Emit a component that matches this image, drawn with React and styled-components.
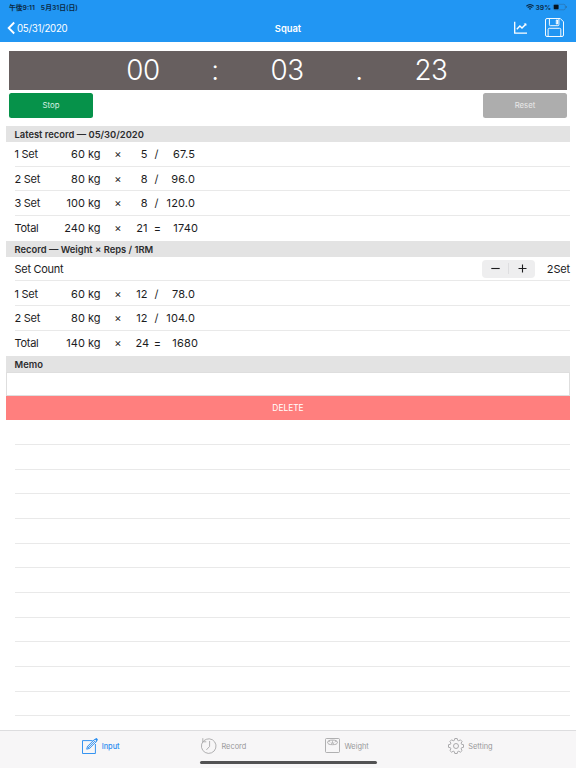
import { useState } from 'react';
import styled, { createGlobalStyle } from 'styled-components';

const GlobalStyle = createGlobalStyle`
  * {
    box-sizing: border-box;
  }

  body {
    margin: 0;
    background: #fff;
    font-family: Inter, 'Noto Sans CJK JP', sans-serif;
    color: #1c1c1e;
  }

  button {
    font-family: inherit;
    border: 0;
    padding: 0;
  }
`;

const StApp = styled.div`
  display: flex;
  flex-direction: column;
  width: 576px;
  height: 768px;
  overflow: hidden;
`;

const StHeader = styled.header`
  flex: none;
  height: 42px;
  background: #2196f3;
`;

const StStatusBar = styled.div`
  display: flex;
  align-items: center;
  justify-content: space-between;
  height: 14px;
  padding: 0 9px;
  font-size: 6.8px;
  font-weight: 600;
  color: #0b2a45;
`;

const StStatusGroup = styled.div`
  display: flex;
  align-items: center;
  gap: ${({ $gap }) => $gap}px;
`;

const StNavBar = styled.div`
  display: grid;
  grid-template-columns: 1fr auto 1fr;
  align-items: center;
  height: 28px;
  padding: 0 12px;
  color: #fff;
`;

const StBack = styled.div`
  display: flex;
  align-items: center;
  gap: 2px;
  margin-left: -5px;
  font-size: 9.7px;
  letter-spacing: -0.25px;
`;

const StTitle = styled.div`
  font-size: 9.4px;
  font-weight: 600;
`;

const StActions = styled.div`
  display: flex;
  align-items: center;
  justify-content: flex-end;
  gap: 18px;
  padding-bottom: 2px;
`;

const StTimer = styled.div`
  display: flex;
  flex: none;
  align-items: center;
  height: 39px;
  margin: 8.5px 9px 0;
  padding: 0 100px 0 98px;
  background: #675f5f;
`;

const StTimerText = styled.div`
  flex: 1;
  text-align: center;
  color: #fff;
  font-size: 27.8px;
  font-weight: 350;
  letter-spacing: -0.4px;
  line-height: 39px;
`;

const StTimerButtons = styled.div`
  display: flex;
  flex: none;
  justify-content: space-between;
  height: 36.5px;
  padding: 3.5px 9px 8.5px;
`;

const StTimerButton = styled.button`
  width: 84px;
  border-radius: 2.5px;
  font-size: 7.8px;
  color: ${({ $color }) => $color};
  background: ${({ $background }) => $background};
`;

const StContent = styled.main`
  display: flex;
  flex: 1;
  flex-direction: column;
  min-height: 0;
  overflow: hidden;
  padding: 0 6px;
`;

const StSectionTitle = styled.div`
  flex: none;
  height: 16px;
  padding-left: 8.5px;
  font-size: 9.4px;
  font-weight: 600;
  line-height: 17px;
  color: #2c2c2e;
  background: #e3e3e3;
`;

const StRow = styled.div`
  display: flex;
  flex: none;
  align-items: center;
  height: 24.7px;
  margin-left: 8.5px;
  padding-top: 0.5px;
  font-size: 11px;
  border-bottom: 1px solid ${({ $last }) => ($last ? 'transparent' : '#e9e9e9')};
`;

const StCell = styled.div`
  flex: none;
  width: ${({ $width }) => $width}px;
  text-align: right;
  white-space: nowrap;
`;

const StLabel = styled(StCell)`
  text-align: left;
  letter-spacing: -0.28px;
`;

const StSign = styled(StCell)`
  text-align: center;
`;

const StResult = styled(StCell)`
  letter-spacing: 0.15px;
`;

const StStepper = styled.div`
  display: flex;
  align-items: center;
  width: 53px;
  height: 18px;
  margin-left: auto;
  border-radius: 4px;
  background: #eeeeef;
`;

const StStepButton = styled.button`
  display: flex;
  flex: 1;
  align-items: center;
  justify-content: center;
  height: 11px;
  color: #1c1c1e;
  background: none;

  & + & {
    border-left: 1px solid #dedee0;
  }
`;

const StSetCount = styled.div`
  width: 35px;
  text-align: right;
  letter-spacing: -0.15px;
`;

const StMemo = styled.input`
  flex: none;
  height: 24px;
  padding: 0 8px;
  border: 1px solid #dedede;
  border-radius: 0;
  outline: 0;
`;

const StDelete = styled.button`
  flex: none;
  height: 24.7px;
  padding-top: 1px;
  font-size: 8.4px;
  color: #fff;
  background: #ff7f7e;
`;

const StTabBar = styled.nav`
  display: flex;
  flex: none;
  flex-direction: column;
  align-items: center;
  height: 38px;
  background: #f7f6f7;
  border-top: 1px solid #dddddf;
`;

const StTabs = styled.div`
  display: flex;
  align-items: center;
  width: 498px;
  height: 29px;
  padding-right: 5px;
`;

const StTab = styled.div`
  display: flex;
  flex: 1;
  align-items: center;
  justify-content: center;
  gap: 4px;
  font-size: 7.4px;
  font-weight: ${({ $active }) => ($active ? 500 : 400)};
  color: ${({ $active }) => ($active ? '#2b8ef0' : '#98989a')};
`;

const StTabName = styled.span`
  padding-top: 2px;
`;

const StHomeIndicator = styled.div`
  width: 177px;
  height: 3px;
  margin-top: 0.5px;
  border-radius: 2px;
  background: #525253;
`;

const StIcon = styled.svg`
  display: block;
  flex: none;
  fill: none;
  stroke: currentColor;
  overflow: visible;
`;

const WifiIcon = () => (
  <StIcon width="8" height="6" viewBox="0 0 8 6" strokeWidth="1.15">
    <path d="M.4 2.2Q4-.9 7.6 2.2M1.7 3.6Q4 1.7 6.3 3.6" />
    <path d="M2.8 4.6Q4 3.7 5.2 4.6L4 5.9z" fill="currentColor" stroke="none" />
  </StIcon>
);

const BatteryIcon = () => (
  <StIcon width="14" height="6" viewBox="0 0 14 6" strokeWidth=".6">
    <rect x=".3" y=".3" width="12" height="5.5" rx="1.5" stroke="#2b6ea6" />
    <rect x=".8" y=".8" width="4.8" height="4.5" rx=".8" fill="#06131e" stroke="none" />
    <path d="M13.2 2v2" stroke="#2b6ea6" strokeWidth="1" />
  </StIcon>
);

const BackIcon = () => (
  <StIcon width="8" height="12" viewBox="0 0 8 12" strokeWidth="1.9">
    <path d="M7.2.5L1.7 6l5.5 5.5" />
  </StIcon>
);

const ChartIcon = () => (
  <StIcon width="13" height="13" viewBox="0 0 13 13" strokeWidth="1.3">
    <path d="M.7.7v11.5H13" />
    <path d="M2.8 8.2L5.9 5 8 7l4-4.1" strokeWidth="1.4" />
    <path d="M9.6 2.4h2.7v2.7z" fill="currentColor" stroke="none" />
  </StIcon>
);

const SaveIcon = () => (
  <StIcon width="19" height="19" viewBox="0 0 19 19" strokeWidth=".95">
    <path d="M2 .5h13.3l3.2 3.3V17q0 1.5-1.5 1.5H2Q.5 18.5.5 17V2Q.5.5 2 .5z" />
    <path d="M4.4.5v6.2q0 1 1 1h7.5q1 0 1-1V.5M11.3 2h1.2v4h-1.2z" />
    <path d="M3.1 18.5v-7q0-1.2 1.2-1.2h10.3q1.2 0 1.2 1.2v7" />
  </StIcon>
);

const InputIcon = () => (
  <StIcon width="16" height="16" viewBox="0 0 16 16" strokeWidth=".95">
    <path d="M10.5 2.6H.5v12.9h12.9V6" />
    <path d="M4.7 11.2l.8-2.8 7.4-7.4 2 2-7.4 7.4zM5.5 8.4l2 2M11.6 2.3l2 2M6.5 9.4l6.1-6.1" />
    <path d="M13 .9l.8-.7q.6-.3 1 .1l.9.9q.4.5 0 1l-.7.7z" fill="currentColor" stroke="none" />
  </StIcon>
);

const RecordIcon = () => (
  <StIcon width="16" height="16" viewBox="0 0 16 16" strokeWidth=".75">
    <path d="M2.2 3.3A7.3 7.3 0 1 0 8.2.8q-3 0-5.5 2M1.8.2v3.6h3.5M8.6 3v5.4l-3.2 3.5" />
  </StIcon>
);

const WeightIcon = () => (
  <StIcon width="15" height="15" viewBox="0 0 15 15" strokeWidth=".75">
    <rect x=".5" y=".5" width="14" height="14" rx="1" />
    <ellipse cx="7.5" cy="4.4" rx="4.9" ry="2.3" />
    <path d="M3.4 3.5h1.3l.6.9M11.6 3.5h-1.3l-.6.9M7.5 2.5v2M6.2 5.3q1.3-1.6 2.6 0z" strokeWidth=".55" />
  </StIcon>
);

const SettingIcon = () => (
  <StIcon width="16" height="16" viewBox="0 0 16 16" strokeWidth=".8" strokeLinejoin="round">
    <path d="M6.8.5h2.4l.4 1.8 1.2.5 1.6-1 1.7 1.7-1 1.6.5 1.2 1.9.4v2.6l-1.9.4-.5 1.2 1 1.6-1.7 1.7-1.6-1-1.2.5-.4 1.8H6.8l-.4-1.8-1.2-.5-1.6 1-1.7-1.7 1-1.6-.5-1.2L.5 9.3V6.7l1.9-.4.5-1.2-1-1.6 1.7-1.7 1.6 1 1.2-.5z" />
    <circle cx="8" cy="8" r="2.5" />
  </StIcon>
);

const latestRecords = [
  { label: '1 Set', weight: 60, reps: 5, result: '67.5' },
  { label: '2 Set', weight: 80, reps: 8, result: '96.0' },
  { label: '3 Set', weight: 100, reps: 8, result: '120.0' },
  { label: 'Total', weight: 240, reps: 21, result: '1740', total: true },
];

const records = [
  { label: '1 Set', weight: 60, reps: 12, result: '78.0' },
  { label: '2 Set', weight: 80, reps: 12, result: '104.0' },
  { label: 'Total', weight: 140, reps: 24, result: '1680', total: true },
];

const tabs = [
  { name: 'Input', Icon: InputIcon },
  { name: 'Record', Icon: RecordIcon },
  { name: 'Weight', Icon: WeightIcon },
  { name: 'Setting', Icon: SettingIcon },
];

const RecordRow = ({ record }) => (
  <StRow $last={record.total}>
    <StLabel $width={38}>{record.label}</StLabel>
    <StCell $width={48}>{record.weight} kg</StCell>
    <StSign $width={35}>×</StSign>
    <StCell $width={12}>{record.reps}</StCell>
    <StSign $width={record.total ? 20 : 18}>{record.total ? '=' : '/'}</StSign>
    <StResult $width={record.total ? 30.5 : 29.5}>{record.result}</StResult>
  </StRow>
);

function App() {
  const [setCount, setSetCount] = useState(2);
  const [memo, setMemo] = useState('');
  const [tab, setTab] = useState('Input');

  return (
    <StApp>
      <GlobalStyle />
      <StHeader>
        <StStatusBar>
          <StStatusGroup $gap={6}>
            <span>午後9:11</span>
            <span>5月31日(日)</span>
          </StStatusGroup>
          <StStatusGroup $gap={2}>
            <WifiIcon />
            <span>39%</span>
            <BatteryIcon />
          </StStatusGroup>
        </StStatusBar>
        <StNavBar>
          <StBack>
            <BackIcon />
            05/31/2020
          </StBack>
          <StTitle>Squat</StTitle>
          <StActions>
            <ChartIcon />
            <SaveIcon />
          </StActions>
        </StNavBar>
      </StHeader>
      <StTimer>
        {['00', ':', '03', '.', '23'].map((text) => (
          <StTimerText key={text}>{text}</StTimerText>
        ))}
      </StTimer>
      <StTimerButtons>
        <StTimerButton $color="#d9f0e2" $background="#06924a">Stop</StTimerButton>
        <StTimerButton $color="#e8e8e8" $background="#adadad">Reset</StTimerButton>
      </StTimerButtons>
      <StContent>
        <StSectionTitle>Latest record — 05/30/2020</StSectionTitle>
        {latestRecords.map((record) => (
          <RecordRow key={record.label} record={record} />
        ))}
        <StSectionTitle>Record — Weight × Reps / 1RM</StSectionTitle>
        <StRow>
          <StLabel $width={60}>Set Count</StLabel>
          <StStepper>
            <StStepButton onClick={() => setSetCount(Math.max(1, setCount - 1))}>
              <StIcon width="9" height="9" viewBox="0 0 9 9" strokeWidth="1.1">
                <path d="M.3 4.5h8.4" />
              </StIcon>
            </StStepButton>
            <StStepButton onClick={() => setSetCount(setCount + 1)}>
              <StIcon width="9" height="9" viewBox="0 0 9 9" strokeWidth="1.1">
                <path d="M.5 4.5h8M4.5.5v8" />
              </StIcon>
            </StStepButton>
          </StStepper>
          <StSetCount>{setCount}Set</StSetCount>
        </StRow>
        {records.map((record) => (
          <RecordRow key={record.label} record={record} />
        ))}
        <StSectionTitle>Memo</StSectionTitle>
        <StMemo value={memo} onChange={(e) => setMemo(e.target.value)} />
        <StDelete>DELETE</StDelete>
        {Array.from({ length: 13 }, (_, i) => (
          <StRow key={i} />
        ))}
      </StContent>
      <StTabBar>
        <StTabs>
          {tabs.map(({ name, Icon }) => (
            <StTab key={name} $active={tab === name} onClick={() => setTab(name)}>
              <Icon />
              <StTabName>{name}</StTabName>
            </StTab>
          ))}
        </StTabs>
        <StHomeIndicator />
      </StTabBar>
    </StApp>
  );
}

export default App;
